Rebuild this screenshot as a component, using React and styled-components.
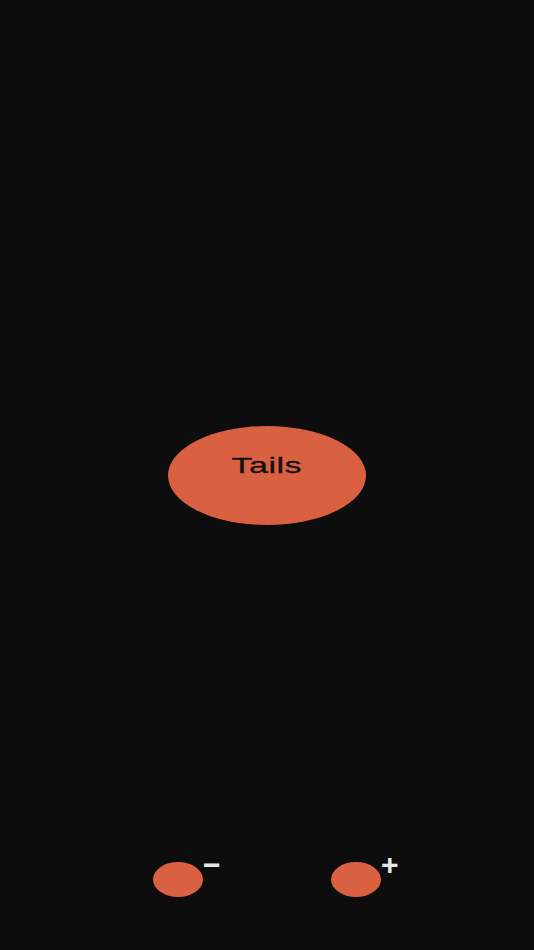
import React from "react";
import styled, { createGlobalStyle } from "styled-components";

const GlobalStyle = createGlobalStyle`
  html, body {
    margin: 0;
    padding: 0;
    background-color: #0d0d0d;
    font-family: "Liberation Sans", Arial, sans-serif;
  }
`;

const Screen = styled.div`
  height: 100vh;
  display: grid;
  grid-template-rows: 1fr auto 1fr;
  justify-items: center;
  background-color: #0d0d0d;
`;

const Coin = styled.div`
  grid-row: 2;
  width: 198px;
  height: 99px;
  border-radius: 50%;
  background-color: #da6042;
  display: flex;
  justify-content: center;
  padding-top: 28px;
  box-sizing: border-box;
`;

const CoinLabel = styled.span`
  font-size: 22px;
  line-height: 24px;
  color: #141111;
  transform: scaleX(1.55);
  letter-spacing: 0.3px;
  -webkit-text-stroke: 0.3px #141111;
`;

const Controls = styled.div`
  grid-row: 3;
  align-self: end;
  display: flex;
  gap: 128px;
  padding-bottom: 53px;
`;

const StepButton = styled.button`
  position: relative;
  width: 50px;
  height: 35px;
  border: none;
  border-radius: 50%;
  background-color: #da6042;
  padding: 0;
  cursor: pointer;
`;

const Sign = styled.span`
  position: absolute;
  left: ${(p) => p.$left}px;
  top: -12px;
  font-family: "Liberation Sans", Arial, sans-serif;
  font-size: 30px;
  font-weight: bold;
  line-height: 1;
  color: #e6e6e6;
`;

const App = () => {
  return (
    <>
      <GlobalStyle />
      <Screen>
        <Coin>
          <CoinLabel>Tails</CoinLabel>
        </Coin>
        <Controls>
          <StepButton aria-label="decrease">
            <Sign $left={50}>−</Sign>
          </StepButton>
          <StepButton aria-label="increase">
            <Sign $left={50}>+</Sign>
          </StepButton>
        </Controls>
      </Screen>
    </>
  );
};

export default App;
